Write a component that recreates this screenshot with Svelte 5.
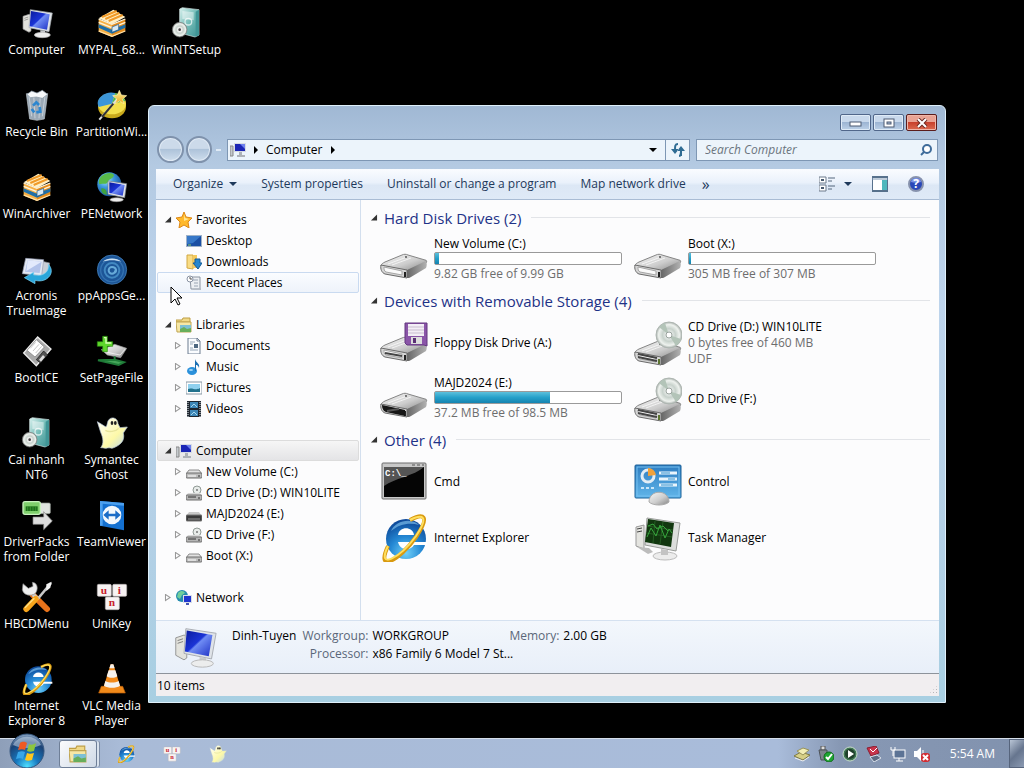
<script lang="ts">
  type Item = {
    icon: string;
    name: string;
    lines?: string[];
    used?: number;
  };

  type Lettering = { box: string; style: string; marks: { x: number; y: number; text: string }[] };

  const desktop = [
    { icon: "computer", label: "Computer" },
    { icon: "recycle", label: "Recycle Bin" },
    { icon: "archive", label: "WinArchiver" },
    { icon: "acronis", label: "Acronis TrueImage" },
    { icon: "bootice", label: "BootICE" },
    { icon: "setup", label: "Cai nhanh NT6" },
    { icon: "driverpacks", label: "DriverPacks from Folder" },
    { icon: "tools", label: "HBCDMenu" },
    { icon: "ie", label: "Internet Explorer 8" },
    { icon: "archive", label: "MYPAL_68..." },
    { icon: "partition", label: "PartitionWi..." },
    { icon: "penetwork", label: "PENetwork" },
    { icon: "ppapps", label: "ppAppsGe..." },
    { icon: "pagefile", label: "SetPageFile" },
    { icon: "ghost", label: "Symantec Ghost" },
    { icon: "teamviewer", label: "TeamViewer" },
    { icon: "unikey", label: "UniKey" },
    { icon: "vlc", label: "VLC Media Player" },
    { icon: "setup", label: "WinNTSetup" },
  ];

  const tree = [
    {
      icon: "star",
      label: "Favorites",
      open: true,
      leaf: true,
      children: [
        { icon: "desktop", label: "Desktop" },
        { icon: "downloads", label: "Downloads" },
        { icon: "recent", label: "Recent Places" },
      ],
    },
    {
      icon: "libraries",
      label: "Libraries",
      open: true,
      children: [
        { icon: "documents", label: "Documents" },
        { icon: "music", label: "Music" },
        { icon: "pictures", label: "Pictures" },
        { icon: "videos", label: "Videos" },
      ],
    },
    {
      icon: "pc-small",
      label: "Computer",
      open: true,
      children: [
        { icon: "hdd-small", label: "New Volume (C:)" },
        { icon: "cd-small", label: "CD Drive (D:) WIN10LITE" },
        { icon: "usb-small", label: "MAJD2024 (E:)" },
        { icon: "cd-small", label: "CD Drive (F:)" },
        { icon: "hdd-small", label: "Boot (X:)" },
      ],
    },
    { icon: "network", label: "Network", open: false, children: [] },
  ];

  const groups: { title: string; items: Item[] }[] = [
    {
      title: "Hard Disk Drives (2)",
      items: [
        { icon: "hdd", name: "New Volume (C:)", used: 2, lines: ["9.82 GB free of 9.99 GB"] },
        { icon: "hdd", name: "Boot (X:)", used: 1, lines: ["305 MB free of 307 MB"] },
      ],
    },
    {
      title: "Devices with Removable Storage (4)",
      items: [
        { icon: "floppy", name: "Floppy Disk Drive (A:)" },
        { icon: "cd", name: "CD Drive (D:) WIN10LITE", lines: ["0 bytes free of 460 MB", "UDF"] },
        { icon: "usb", name: "MAJD2024 (E:)", used: 62, lines: ["37.2 MB free of 98.5 MB"] },
        { icon: "cd", name: "CD Drive (F:)" },
      ],
    },
    {
      title: "Other (4)",
      items: [
        { icon: "cmd", name: "Cmd" },
        { icon: "control", name: "Control" },
        { icon: "ie", name: "Internet Explorer" },
        { icon: "taskmgr", name: "Task Manager" },
      ],
    },
  ];

  // icons that carry letters on top of their shape
  const lettering: Record<string, Lettering> = {
    unikey: {
      box: "0 0 48 48",
      style: "keycap",
      marks: [
        { x: 12, y: 19, text: "u" },
        { x: 35, y: 19, text: "i" },
        { x: 24, y: 38, text: "n" },
      ],
    },
    cmd: { box: "0 0 48 48", style: "prompt", marks: [{ x: 5, y: 18, text: "C:\\_" }] },
    help: { box: "0 0 16 16", style: "question", marks: [{ x: 8, y: 12, text: "?" }] },
  };

  const commands = ["System properties", "Uninstall or change a program", "Map network drive"];
  const pinned = [
    { icon: "ie", label: "Internet Explorer" },
    { icon: "unikey", label: "UniKey" },
    { icon: "ghost", label: "Symantec Ghost" },
  ];
  const tray = ["tray-disk", "tray-usb", "tray-play", "tray-red", "tray-net", "tray-sound"];

  let selected = $state("Computer");
  let hovered = $state("Recent Places");
  let search = $state("");
</script>

{#snippet icon(name: string)}
  {#if lettering[name]}
    <svg class="icon" viewBox={lettering[name].box} aria-hidden="true">
      <use href="#{name}" />
      {#each lettering[name].marks as mark}
        <text class={lettering[name].style} x={mark.x} y={mark.y}>{mark.text}</text>
      {/each}
    </svg>
  {:else}
    <svg class="icon" aria-hidden="true"><use href="#{name}" /></svg>
  {/if}
{/snippet}

<svg class="sprite" aria-hidden="true">
  <defs>
    <linearGradient id="screen" x1="0" y1="0" x2="1" y2="1">
      <stop offset="0" stop-color="#0a1a9c" /><stop offset=".45" stop-color="#1b34d6" />
      <stop offset=".5" stop-color="#6f8cf4" /><stop offset="1" stop-color="#1c2fc4" />
    </linearGradient>
    <linearGradient id="metal" x1="0" y1="0" x2="1" y2="1">
      <stop offset="0" stop-color="#f8f8f8" /><stop offset=".55" stop-color="#cdcdcd" /><stop offset="1" stop-color="#858585" />
    </linearGradient>
    <linearGradient id="metal-side" x1="0" y1="0" x2="1" y2="0">
      <stop offset="0" stop-color="#666" /><stop offset="1" stop-color="#b2b2b2" />
    </linearGradient>
    <linearGradient id="teal" x1="0" y1="0" x2="1" y2="1">
      <stop offset="0" stop-color="#d9f1ee" /><stop offset=".5" stop-color="#74bdb8" /><stop offset="1" stop-color="#3b8f92" />
    </linearGradient>
    <linearGradient id="gold" x1="0" y1="0" x2="0" y2="1">
      <stop offset="0" stop-color="#fff0a0" /><stop offset="1" stop-color="#e8a91d" />
    </linearGradient>
    <linearGradient id="sky" x1="0" y1="0" x2="0" y2="1">
      <stop offset="0" stop-color="#2d7cc0" /><stop offset="1" stop-color="#61b6ea" />
    </linearGradient>
    <radialGradient id="ie-blue" cx=".5" cy=".85" r=".8">
      <stop offset="0" stop-color="#6fd0f8" /><stop offset=".5" stop-color="#2488d4" /><stop offset="1" stop-color="#0e4a9a" />
    </radialGradient>
    <radialGradient id="globe" cx=".35" cy=".3" r=".8">
      <stop offset="0" stop-color="#b9ecff" /><stop offset=".4" stop-color="#3d9ae0" /><stop offset="1" stop-color="#0d3f8f" />
    </radialGradient>
    <radialGradient id="disc" cx=".5" cy=".5" r=".5">
      <stop offset="0" stop-color="#fff" /><stop offset=".5" stop-color="#c8d2cc" /><stop offset=".8" stop-color="#eef2ee" /><stop offset="1" stop-color="#aab2ae" />
    </radialGradient>
    <radialGradient id="orb" cx=".5" cy=".95" r=".95">
      <stop offset="0" stop-color="#4fe0ff" /><stop offset=".35" stop-color="#1779c0" />
      <stop offset=".75" stop-color="#1b4275" /><stop offset="1" stop-color="#8fa9c6" />
    </radialGradient>
    <linearGradient id="ghost-body" x1="0" y1="0" x2="1" y2="1">
      <stop offset="0" stop-color="#fff" /><stop offset=".6" stop-color="#fdf9a8" /><stop offset="1" stop-color="#b9d6f2" />
    </linearGradient>
  </defs>

  <symbol id="computer" viewBox="0 0 48 48">
    <path d="M3 14l9-3 3 1v24l-3 2-9-5z" fill="#e3e3dd" stroke="#8f9090" />
    <path d="M5 17l6-2M5 20l6-2" stroke="#777" />
    <path d="M14 4l33 5-5 28-30-6z" fill="#dfe3e8" stroke="#a5aab0" />
    <path d="M15 6l28 5-4 23-26-5z" fill="url(#screen)" />
    <path d="M29 35l7 1v5h-7z" fill="#c6c9cc" />
    <ellipse cx="32" cy="42" rx="12" ry="4" fill="#eceded" stroke="#b5b5b5" />
  </symbol>
  <symbol id="archive" viewBox="0 0 48 48">
    <path d="M4 18l20 8v19L4 37z" fill="#f7b045" />
    <path d="M24 26l20-8v18l-20 9z" fill="#e58b1b" />
    <path d="M4 17L26 4l18 11-20 11z" fill="#fff0c6" />
    <path d="M9 15L31 6M14 18l21-9M19 21l21-9" stroke="#f09a28" stroke-width="3" />
    <path d="M4 18l20 8 20-8M4 23l20 8 20-8" fill="none" stroke="#fff3d8" stroke-width="2" />
    <path d="M4 26l20 8 20-8v5l-20 9-20-9z" fill="#1f6fa8" />
    <path d="M24 30l10-4v8l-10 4z" fill="#d8e9f4" stroke="#174f7c" />
    <path d="M4 36l20 8 20-8" fill="none" stroke="#ffe3ac" stroke-width="2" />
  </symbol>
  <symbol id="setup" viewBox="0 0 48 48">
    <path d="M13 3l4-2 25 3v38l-6 3-23-6z" fill="url(#teal)" stroke="#d6e9e8" />
    <path d="M37 7l5-3v38l-5 3z" fill="#3f9596" />
    <path d="M17 6l17 2v12l-17-2z" fill="#fff" opacity=".45" />
    <circle cx="26" cy="22" r="5" fill="none" stroke="#fff" stroke-width="2" opacity=".7" />
    <circle cx="13" cy="34" r="11" fill="url(#disc)" stroke="#777" />
    <circle cx="13" cy="34" r="3" fill="#444" stroke="#eee" stroke-width="2" />
  </symbol>
  <symbol id="recycle" viewBox="0 0 48 48">
    <path d="M8 7h32l-5 38-11 2-11-2z" fill="#b7c7d6" opacity=".85" stroke="#e3ebf2" />
    <path d="M12 10l4 31M19 9l2 35M29 9l-2 35M36 10l-4 31" stroke="#edf3f8" opacity=".8" />
    <path d="M9 8l7-5 8 3 8-4 8 6-8 6-9-2-9 1z" fill="#f6f8fa" stroke="#8795a3" />
    <path d="M18 25l5-5 4 4M28 27l1 7-6 1M20 35l-4-5" fill="none" stroke="#2b86cf" stroke-width="4" />
  </symbol>
  <symbol id="partition" viewBox="0 0 48 48">
    <ellipse cx="24" cy="27" rx="21" ry="17" fill="#c9a91c" />
    <ellipse cx="24" cy="22" rx="21" ry="16" fill="#f3e04c" />
    <path d="M24 22L4 27A21 16 0 0 1 29 6z" fill="#3d96d8" />
    <path d="M24 22L29 6a21 16 0 0 1 15 12z" fill="#4cb850" />
    <path d="M5 46L32 15" stroke="#ddd" stroke-width="3" />
    <path d="M9 42l17-20" stroke="#333" stroke-width="3" />
    <path d="M35 2l3 7 8 1-6 5 2 7-7-4-6 4 2-7-6-5 7-1z" fill="url(#gold)" stroke="#fff4b5" />
  </symbol>
  <symbol id="penetwork" viewBox="0 0 48 48">
    <circle cx="20" cy="20" r="18" fill="url(#globe)" />
    <path d="M8 8c8-7 17-6 19-2-1 6-7 5-9 10-3 6-8 1-13 4-2-4 0-9 3-12z" fill="#58ba49" />
    <path d="M8 26c6-1 9 4 8 10-6-1-9-5-8-10z" fill="#3fa340" />
    <path d="M18 15l28 4-3 21-25-5z" fill="#e3e6ea" stroke="#777f88" />
    <path d="M20 17l23 4-3 16-20-4z" fill="url(#screen)" />
    <ellipse cx="31" cy="43" rx="10" ry="3" fill="#eee" stroke="#999" />
  </symbol>
  <symbol id="acronis" viewBox="0 0 48 48">
    <path d="M30 12l13 3-3 20H26z" fill="#c9ced6" stroke="#858b93" />
    <path d="M7 8l27 2-3 24-29-3z" fill="#e4e9f3" stroke="#939ab1" />
    <path d="M10 11l21 2-3 17-22-2z" fill="#b3c3ea" />
    <path d="M10 11l21 2-23 14z" fill="#e3eafc" />
    <path d="M41 17c12 12-2 29-20 24v5L5 37l14-8v4c13 3 24-4 22-16z" fill="#2aa6da" stroke="#7fd5f5" />
  </symbol>
  <symbol id="ppapps" viewBox="0 0 48 48">
    <circle cx="24" cy="25" r="22" fill="#1c5597" stroke="#4d8bc4" />
    <circle cx="24" cy="26" r="17" fill="none" stroke="#3472b0" stroke-width="2" />
    <circle cx="24" cy="26" r="11" fill="none" stroke="#4289c2" stroke-width="3" />
    <path d="M29 26a5 5 0 1 1-5-5c7 0 8 8 3 9" fill="none" stroke="#67abd9" stroke-width="3" />
    <path d="M10 13a18 13 0 0 1 28 0c-8-3-20-3-28 0z" fill="#dcebf7" opacity=".9" />
  </symbol>
  <symbol id="bootice" viewBox="0 0 48 48">
    <path d="M4 27L25 3l20 18-22 25z" fill="#a9a9a9" stroke="#eee" stroke-width="2" />
    <path d="M9 23L23 7l12 11-14 15z" fill="#fff" stroke="#777" />
    <path d="M14 20l8-9M18 24l9-10M22 27l9-10" stroke="#aaa" />
    <path d="M23 37l11-13 6 6-11 12z" fill="#555" stroke="#111" />
    <path d="M27 37l6-7 3 3-6 7z" fill="#ddd" />
  </symbol>
  <symbol id="pagefile" viewBox="0 0 48 48">
    <path d="M8 22l20-8 18 6-9 14-20-4z" fill="url(#metal)" stroke="#999" />
    <path d="M17 26l19 4 8-9" fill="none" stroke="#fff" />
    <path d="M28 32v7M3 38l31 7 8-4-14-4z" fill="#46a65a" stroke="#1f7c38" stroke-width="3" />
    <path d="M10 2h7v8h8v7h-8v8h-7v-8H2v-7h8z" fill="#5dd62b" stroke="#2a8a10" />
    <path d="M12 4h3v8h8" fill="none" stroke="#d8ffb5" stroke-width="2" />
  </symbol>
  <symbol id="ghost" viewBox="0 0 48 48">
    <path d="M18 6c4-8 15-5 15 4l3 6 11-1-6 9c3 12-5 19-17 23-3-1-6-1-9 0-2 0-4-1-8-1 5-6 4-14 0-23L2 7l13 8c2-3 2-6 3-9z" fill="url(#ghost-body)" stroke="#b9c9dc" />
    <ellipse cx="24" cy="9" rx="2" ry="3" fill="#222" />
    <ellipse cx="29" cy="9" rx="2" ry="3" fill="#222" />
    <path d="M14 20c5 3 16 2 20-3" fill="none" stroke="#e8e59b" stroke-width="2" />
  </symbol>
  <symbol id="driverpacks" viewBox="0 0 48 48">
    <rect x="25" y="6" width="19" height="16" rx="2" fill="#dfe3df" stroke="#8b918b" />
    <rect x="3" y="4" width="26" height="19" rx="3" fill="#7fd06c" stroke="#c9f3bf" stroke-width="2" />
    <rect x="7" y="11" width="18" height="7" fill="#1f6f1b" />
    <path d="M10 11v7M14 11v7M18 11v7M22 11v7" stroke="#45a93c" />
    <path d="M18 27h16v-8l13 14-13 13v-8H18z" fill="#dedede" stroke="#868686" />
  </symbol>
  <symbol id="teamviewer" viewBox="0 0 48 48">
    <path d="M6 3l36 3v41L6 40z" fill="#1470d0" />
    <path d="M6 3l36 3v4L10 7v33l-4 0z" fill="#4ca0ef" />
    <circle cx="24" cy="24" r="14" fill="#f3f8fd" />
    <path d="M11 24l8-7v5h10v-5l8 7-8 7v-5H19v5z" fill="#1b6cc7" />
  </symbol>
  <symbol id="tools" viewBox="0 0 48 48">
    <path d="M17 20L39 42" stroke="#e8731b" stroke-width="9" stroke-linecap="round" />
    <path d="M18 20l8 8" stroke="#ccc" stroke-width="6" />
    <path d="M3 4l8 7 7-3-1-6c9 1 9 12 4 17-6 4-17 3-19-6z" fill="#eee" stroke="#888" />
    <path d="M45 3L25 27" stroke="#c8c8c8" stroke-width="4" />
    <path d="M38 5l8-4-2 9-6 5z" fill="#f4f4f4" />
    <path d="M22 27L8 42" stroke="#f7a51c" stroke-width="9" stroke-linecap="round" />
    <path d="M20 26L6 40" stroke="#ffdf83" stroke-width="2" />
  </symbol>
  <symbol id="ie" viewBox="0 0 48 48">
    <circle cx="26" cy="25" r="20" fill="url(#ie-blue)" />
    <path d="M18 21c1-9 15-9 16 0z" fill="#fff" />
    <path d="M18 28h29v3H34c-3 6-14 6-16-3z" fill="#fff" />
    <path d="M11 17C15 7 31 3 39 11c-9-3-20-1-28 6z" fill="#8ccdf5" opacity=".6" />
    <path d="M8 32C-5 60 20 46 36 23 51 1 43-1 30 6" fill="none" stroke="#d99a10" stroke-width="4" />
    <path d="M8 32C-4 57 20 44 36 22 50 1 42 0 30 6" fill="none" stroke="#ffdf5e" stroke-width="2" />
  </symbol>
  <symbol id="unikey" viewBox="0 0 48 48">
    <g fill="#f7f3f3" stroke="#b9b4b4">
      <rect x="2" y="5" width="21" height="18" rx="2" /><rect x="25" y="5" width="21" height="18" rx="2" />
      <rect x="14" y="24" width="21" height="19" rx="2" />
    </g>
  </symbol>
  <symbol id="vlc" viewBox="0 0 48 48">
    <path d="M8 35h32l4 10H4z" fill="#f08a1a" stroke="#b85c06" />
    <path d="M22 2h4l11 35c-5 5-21 5-26 0z" fill="#f28b1c" />
    <path d="M19 11h10l3 9c-5 3-11 3-16 0zM14 27c6 3 14 3 20 0l2 7c-6 4-18 4-24 0z" fill="#f5f2ee" />
    <path d="M22 2h4l2 6h-8z" fill="#f5f2ee" />
  </symbol>

  <symbol id="hdd" viewBox="0 0 48 48">
    <path d="M1 30c0-2 2-3 4-4l17-7c2-1 4-1 6 0l17 5c2 0 2 2 1 3L28 35z" fill="url(#metal)" stroke="#858585" />
    <path d="M27 34l19-9c1 2 1 5 0 7L31 41c-1 1-3 1-4 1z" fill="url(#metal-side)" />
    <path d="M1 29l26 5v8L5 38c-3-1-5-5-4-9z" fill="#d5d5d5" stroke="#6b6b6b" />
    <path d="M4 31l18 4v4L6 36c-2-1-2-3-2-5z" fill="#fafafa" stroke="#a5a5a5" />
    <path d="M25 36v5" stroke="#222" stroke-width="2" />
    <path d="M8 28l19-7M12 29l19-7" stroke="#fff" opacity=".7" />
    <circle cx="26" cy="21" r="1" fill="#555" />
  </symbol>
  <symbol id="usb" viewBox="0 0 48 48">
    <use href="#hdd" />
    <path d="M2 30l23 5v6L6 37c-3-1-4-4-4-7z" fill="#161616" />
    <path d="M7 36l12-2" stroke="#555" stroke-width="2" />
  </symbol>
  <symbol id="floppy" viewBox="0 0 48 48">
    <use href="#hdd" />
    <path d="M5 34l17 3" stroke="#444" stroke-width="2" />
    <path d="M25 4h22v23l-3-1H27l-2-2z" fill="#8a55a8" stroke="#63377f" />
    <path d="M28 5h16v12H28z" fill="#f3eef6" />
    <path d="M28 8h16M28 11h16M28 14h16" stroke="#c9bdd0" />
    <path d="M31 18h11v7H31z" fill="#ddd" /><path d="M33 19h3v5h-3z" fill="#5a2f75" />
  </symbol>
  <symbol id="cd" viewBox="0 0 48 48">
    <g transform="translate(0 4)">
      <use href="#hdd" />
      <path d="M4 31l19 4M4 34l19 4" stroke="#444" stroke-width="2" />
      <path d="M25 36v5" stroke="#5c7430" stroke-width="2" />
    </g>
    <circle cx="35" cy="16" r="13" fill="url(#disc)" stroke="#aeb6b1" />
    <path d="M35 16L25 8a13 13 0 0 1 6-4zM35 16l12 4a13 13 0 0 1-5 7z" fill="#b3c4b8" />
    <circle cx="35" cy="16" r="3" fill="#fff" stroke="#9aa39e" />
  </symbol>
  <symbol id="cmd" viewBox="0 0 48 48">
    <rect x="2" y="5" width="44" height="36" rx="1" fill="#c8c8c8" stroke="#6d6d6d" />
    <rect x="4" y="9" width="40" height="30" fill="#050505" />
    <path d="M4 9h40C34 18 15 20 4 28z" fill="#555" />
    <path d="M32 7h3M37 7h3M42 7h2" stroke="#555" />
  </symbol>
  <symbol id="control" viewBox="0 0 48 48">
    <rect x="1" y="7" width="46" height="33" rx="1" fill="url(#sky)" stroke="#1a6098" />
    <rect x="3" y="9" width="42" height="29" fill="none" stroke="#75bff0" />
    <circle cx="14" cy="18" r="6" fill="none" stroke="#e2edf5" stroke-width="3" />
    <path d="M14 18v-8a8 8 0 0 1 8 7z" fill="#f0a13b" />
    <path d="M25 15h18M25 21h18M25 27h18" stroke="#eaf5fc" stroke-width="3" />
    <path d="M27 15h9M34 21h7M27 27h12" stroke="#2d8fce" />
    <path d="M7 30h3M12 30h3M17 30h3" stroke="#c9e6f8" stroke-width="2" />
    <path d="M15 44c0-13 20-13 20 0-4 4-16 4-20 0z" fill="url(#metal)" stroke="#aaa" />
  </symbol>
  <symbol id="taskmgr" viewBox="0 0 48 48">
    <path d="M2 13l8-2v24l-8-3z" fill="#e4e4e0" stroke="#999" />
    <path d="M3 15l5-1M3 18l5-1" stroke="#444" />
    <path d="M3 33l12 1 4 4-5 2z" fill="#bcbcbc" />
    <path d="M13 4l33 5-4 28-31-6z" fill="#dcdedc" stroke="#999c99" />
    <path d="M14 5l26 4-3 24-26-5z" fill="#11370f" />
    <path d="M13 12l26 4M12 19l26 4M21 7l-2 22M29 8l-3 22" stroke="#245c23" />
    <path d="M13 23l4-9 5 8 4-11 5 13 4-9 3 4M14 12l5-2 4 5 6-3 5 5" fill="none" stroke="#36a63c" />
    <ellipse cx="31" cy="42" rx="12" ry="4" fill="#ececec" stroke="#bbb" />
    <path d="M27 35l7 1v5h-7z" fill="#c3c3c3" />
  </symbol>

  <symbol id="star" viewBox="0 0 16 16">
    <path d="M8 0l2 5 6 1-4 4 1 6-5-3-5 3 1-6-4-4 6-1z" fill="#ffb92b" stroke="#dc8716" />
    <path d="M8 2l1 4 4 1-5 2z" fill="#ffe592" />
  </symbol>
  <symbol id="desktop" viewBox="0 0 16 16">
    <rect y="2" width="16" height="12" fill="#9fb2c8" /><rect x="1" y="3" width="14" height="10" fill="#1b4fa3" />
    <path d="M1 3h14L7 10l-6 1z" fill="#3778c8" /><path d="M2 12h3" stroke="#8fd36b" />
  </symbol>
  <symbol id="downloads" viewBox="0 0 16 16">
    <path d="M1 1h6v14l-6-1z" fill="#f9dc85" stroke="#d2a843" /><path d="M7 1h4v13H7z" fill="#f3c95d" />
    <path d="M9 5h5v4h2l-4 6-5-6h2z" fill="#2687cf" stroke="#125a98" />
  </symbol>
  <symbol id="recent" viewBox="0 0 16 16">
    <path d="M4 2h10v12H5z" fill="#eceff3" stroke="#8b94a0" /><path d="M7 5h5M8 8h4M8 11h4" stroke="#9aa5b3" />
    <circle cx="4" cy="4" r="3" fill="#fff" stroke="#8a93a3" /><path d="M4 2v2h2" fill="none" stroke="#555" />
    <path d="M6 14l9-1v2H7z" fill="#b5bcc6" />
  </symbol>
  <symbol id="libraries" viewBox="0 0 16 16">
    <path d="M0 3h6l1-2h7v4H0z" fill="#f0d988" stroke="#bf9f45" /><path d="M0 5h15v10H1z" fill="#f6e7a5" stroke="#bfa553" />
    <path d="M4 8h11v7H4z" fill="#7dc0d5" /><path d="M4 12l4-2 3 2 4-1v4H4z" fill="#68ae5b" />
  </symbol>
  <symbol id="documents" viewBox="0 0 16 16">
    <path d="M2 0h9l3 3v13H2z" fill="#fafcff" stroke="#6d7d90" /><path d="M11 0v3h3" fill="none" stroke="#6d7d90" />
    <path d="M4 4h5M4 6h3M4 10h3M4 12h8" stroke="#96a6b8" /><path d="M8 6h4v4H8z" fill="#4c6680" />
  </symbol>
  <symbol id="music" viewBox="0 0 16 16">
    <ellipse cx="6" cy="12" rx="5" ry="4" fill="#2b91db" /><path d="M9 12V0c1 4 5 4 4 9-1-3-2-3-3-3v6z" fill="#1b6fb3" />
    <ellipse cx="5" cy="11" rx="2" ry="1" fill="#9fd4f6" />
  </symbol>
  <symbol id="pictures" viewBox="0 0 16 16">
    <rect y="2" width="16" height="12" fill="#fff" stroke="#8797a5" /><rect x="2" y="4" width="12" height="8" fill="#8fd0ee" />
    <path d="M2 9c4-2 8 2 12-1v4H2z" fill="#22728d" />
  </symbol>
  <symbol id="videos" viewBox="0 0 16 16">
    <rect x="1" width="14" height="16" fill="#1f2730" /><rect x="4" y="1" width="8" height="6" fill="#3d87b8" /><rect x="4" y="9" width="8" height="6" fill="#3d87b8" />
    <path d="M2 1v15M14 1v15" stroke="#e8eef2" stroke-dasharray="1 1" /><path d="M5 6l3-3 3 3M5 14l3-3 3 3" stroke="#a5d8ee" fill="none" />
  </symbol>
  <symbol id="pc-small" viewBox="0 0 16 16">
    <path d="M0 4h3v10H0z" fill="#c4c9cd" stroke="#888" /><path d="M4 1h12v9H4z" fill="#d6dbe3" />
    <path d="M5 2h10v7H5z" fill="#1a25b5" /><path d="M10 2h5v5z" fill="#6c80ee" /><path d="M9 10h3v3h3v2H7v-2h2z" fill="#adb2b8" />
  </symbol>
  <symbol id="hdd-small" viewBox="0 0 16 16">
    <path d="M3 6h10l3 4H0z" fill="#e2e2e2" stroke="#8c8c8c" /><rect y="9" width="16" height="5" rx="1" fill="#bdbdbd" stroke="#6d6d6d" />
    <path d="M2 12h8" stroke="#fff" /><path d="M12 12h2" stroke="#333" />
  </symbol>
  <symbol id="usb-small" viewBox="0 0 16 16">
    <path d="M3 6h10l3 4H0z" fill="#c9c9c9" /><rect y="9" width="16" height="6" rx="1" fill="#3a3a3a" stroke="#777" /><path d="M2 13h12" stroke="#999" />
  </symbol>
  <symbol id="cd-small" viewBox="0 0 16 16">
    <circle cx="11" cy="5" r="4" fill="#e8ecea" stroke="#919a96" /><circle cx="11" cy="5" r="1" fill="#777" />
    <path d="M2 8h12l2 3H0z" fill="#d8d8d8" /><rect y="10" width="16" height="5" rx="1" fill="#b5b5b5" stroke="#6c6c6c" /><path d="M2 12h8M12 13h2" stroke="#333" />
  </symbol>
  <symbol id="network" viewBox="0 0 16 16">
    <circle cx="6" cy="6" r="6" fill="#258cae" /><path d="M2 3c3-3 6-2 7 0L6 5 4 9 1 7z" fill="#70ce9c" />
    <path d="M7 5h9v8H7z" fill="#d8dde8" /><path d="M8 6h7v6H8z" fill="#1f35cf" /><path d="M10 13h3v2h-3z" fill="#4556b2" />
  </symbol>

  <symbol id="views" viewBox="0 0 16 16">
    <path d="M0 1h7v6H0zM0 9h7v6H0z" fill="#fff" stroke="#6c7a8c" /><path d="M2 4h3M2 12h3" stroke="#47596e" stroke-width="2" />
    <path d="M9 2h7M9 5h4M9 10h7M9 13h4" stroke="#55677c" />
  </symbol>
  <symbol id="pane" viewBox="0 0 16 16">
    <rect x="0" y="1" width="16" height="14" fill="#fff" stroke="#57718c" stroke-width="2" /><path d="M0 3h16" stroke="#7f98b4" />
    <path d="M10 4h5v10h-5z" fill="#4fb8bd" />
  </symbol>
  <symbol id="help" viewBox="0 0 16 16">
    <circle cx="8" cy="8" r="7" fill="#2a48b8" stroke="#8792ad" stroke-width="2" />
    <path d="M3 6a5 4 0 0 1 10 0c-3 1-7 1-10 0z" fill="#7d95e6" />
  </symbol>
  <symbol id="lens" viewBox="0 0 12 12">
    <circle cx="7" cy="5" r="4" fill="#fff" stroke="#3f6c9a" stroke-width="2" /><path d="M4 8l-3 3" stroke="#3f6c9a" stroke-width="2" />
  </symbol>
  <symbol id="refresh" viewBox="0 0 14 14">
    <path d="M7 1c-3 0-3 2-3 6M10 13V5M8 13c2 0 2-2 2-6" fill="none" stroke="#2f6c93" stroke-width="2" />
    <path d="M0 6h8l-4 5zM6 8h8l-4-5z" fill="#2f6c93" />
  </symbol>

  <symbol id="tray-disk" viewBox="0 0 16 16">
    <path d="M0 10l7-4 9 3-7 5z" fill="#d6cf86" stroke="#7f7a43" /><path d="M3 5l6-3 6 2-6 5z" fill="#f1edb5" stroke="#98935a" /><path d="M1 12l8 3 6-4" stroke="#eee" fill="none" />
  </symbol>
  <symbol id="tray-usb" viewBox="0 0 16 16">
    <path d="M3 0h4v4H3z" fill="#ddd" stroke="#555" /><path d="M1 4h8v10H3z" fill="#7d858e" stroke="#4d5359" />
    <circle cx="11" cy="11" r="5" fill="#1ea632" stroke="#0f6a1a" /><path d="M8 11l2 2 4-5" fill="none" stroke="#fff" stroke-width="2" />
  </symbol>
  <symbol id="tray-play" viewBox="0 0 16 16">
    <circle cx="8" cy="8" r="7" fill="#3f7752" stroke="#c9dccd" /><circle cx="8" cy="8" r="5" fill="#20402b" /><path d="M6 4l6 4-6 4z" fill="#fff" />
  </symbol>
  <symbol id="tray-red" viewBox="0 0 16 16">
    <path d="M1 2l9-2 3 7-8 3z" fill="#c9344c" stroke="#8d1d30" /><path d="M4 3l3 3 4-4" stroke="#fff" fill="none" /><path d="M4 11l7-2 4 3-7 4z" fill="#5d6b83" stroke="#d9e0ea" />
  </symbol>
  <symbol id="tray-net" viewBox="0 0 16 16">
    <rect x="4" y="4" width="11" height="8" fill="#5c7395" stroke="#fff" /><path d="M9 12v3M6 15h7M1 1v3h4V1M3 4v6" stroke="#fff" fill="none" />
  </symbol>
  <symbol id="tray-sound" viewBox="0 0 16 16">
    <path d="M0 5h3l4-4v14l-4-4H0z" fill="#fff" /><path d="M9 4v7" stroke="#fff" />
    <rect x="7" y="7" width="9" height="9" rx="3" fill="#d22d33" /><path d="M9 9l5 5M14 9l-5 5" stroke="#fff" stroke-width="2" />
  </symbol>

  <symbol id="start" viewBox="0 0 36 36">
    <circle cx="18" cy="18" r="17" fill="url(#orb)" stroke="#33557e" />
    <path d="M4 12a15 13 0 0 1 28 0c-8 4-20 4-28 0z" fill="#d5e4f2" opacity=".5" />
    <path d="M11 10c3-2 5-1 7 0l-2 7c-2-1-4-1-7 0z" fill="#ee5a24" />
    <path d="M20 11c2 1 4 1 7-1l-2 8c-3 1-5 1-7 0z" fill="#8cc63f" />
    <path d="M9 19c3-1 5-1 7 0l-2 7c-2-1-4-1-7 0z" fill="#37a6e8" />
    <path d="M18 20c2 1 4 1 7 0l-2 7c-3 1-5 1-7 0z" fill="#ffc61e" />
  </symbol>
</svg>

<div class="screen">
  <main class="desktop">
    <div class="shortcuts">
      {#each desktop as shortcut}
        <button class="shortcut">
          {@render icon(shortcut.icon)}
          <span>{shortcut.label}</span>
        </button>
      {/each}
    </div>

    <section class="window" aria-label="Computer">
      <header class="titlebar">
        <button class="caption" aria-label="Minimize">
          <svg viewBox="0 0 14 10"><rect x="1" y="4" width="11" height="4" fill="#fff" stroke="#4c5b73" /></svg>
        </button>
        <button class="caption" aria-label="Maximize">
          <svg viewBox="0 0 14 10"><rect x="2" y="1" width="10" height="8" fill="#fff" stroke="#4c5b73" /><rect x="5" y="4" width="4" height="2" fill="#a9bdd8" stroke="#4c5b73" /></svg>
        </button>
        <button class="caption close" aria-label="Close">
          <svg viewBox="0 0 14 10"><path d="M3 1l8 8M11 1L3 9" stroke="#6d2a22" stroke-width="4" /><path d="M3 1l8 8M11 1L3 9" stroke="#fff" stroke-width="2" /></svg>
        </button>
      </header>

      <div class="navbar">
        <div class="history">
          <button class="round" aria-label="Back"></button>
          <button class="round" aria-label="Forward"></button>
          <span class="dash"></span>
        </div>
        <div class="address">
          {@render icon("pc-small")}
          <i class="tri right"></i>
          <button class="crumb">Computer</button>
          <i class="tri right"></i>
          <button class="drop" aria-label="Previous locations"><i class="tri down"></i></button>
          <button class="refresh" aria-label="Refresh">{@render icon("refresh")}</button>
        </div>
        <label class="search">
          <input type="text" placeholder="Search Computer" aria-label="Search Computer" bind:value={search} />
          {@render icon("lens")}
        </label>
      </div>

      <div class="toolbar">
        <button>Organize <i class="tri down"></i></button>
        {#each commands as command}
          <button>{command}</button>
        {/each}
        <button class="more" aria-label="More commands">»</button>
        <div class="tools">
          <button aria-label="Change your view">{@render icon("views")}<i class="tri down"></i></button>
          <button aria-label="Show the preview pane">{@render icon("pane")}</button>
          <button aria-label="Get help">{@render icon("help")}</button>
        </div>
      </div>

      <div class="content">
        <nav class="tree">
          {#each tree as group}
            <ul>
              <li>
                <button
                  class="node"
                  class:selected={selected === group.label}
                  onclick={() => (selected = group.label)}
                >
                  <i class="twist" class:open={group.open}></i>
                  {@render icon(group.icon)}
                  {group.label}
                </button>
              </li>
              {#each group.children as child}
                <li>
                  <button
                    class="node child"
                    class:selected={selected === child.label}
                    class:hovered={hovered === child.label}
                    onclick={() => (selected = child.label)}
                    onmouseenter={() => (hovered = child.label)}
                  >
                    <i class="twist" class:hidden={group.leaf}></i>
                    {@render icon(child.icon)}
                    {child.label}
                  </button>
                </li>
              {/each}
            </ul>
          {/each}
        </nav>

        <div class="files">
          {#each groups as group}
            <section>
              <h2><i class="twist open"></i>{group.title}</h2>
              <div class="tiles">
                {#each group.items as item}
                  <button class="tile">
                    {@render icon(item.icon)}
                    <span class="info">
                      <span>{item.name}</span>
                      {#if item.used}
                        <span class="meter"><span class="fill" style="width: {item.used}%"></span></span>
                      {/if}
                      {#each item.lines ?? [] as line}
                        <span class="sub">{line}</span>
                      {/each}
                    </span>
                  </button>
                {/each}
              </div>
            </section>
          {/each}
        </div>
      </div>

      <div class="details">
        {@render icon("computer")}
        <strong>Dinh-Tuyen</strong>
        <dl>
          <dt>Workgroup:</dt>
          <dd>WORKGROUP</dd>
          <dt>Memory:</dt>
          <dd>2.00 GB</dd>
          <dt>Processor:</dt>
          <dd>x86 Family 6 Model 7 St...</dd>
        </dl>
      </div>
      <footer class="status">10 items<span class="grip"></span></footer>
    </section>

    <svg class="cursor" viewBox="0 0 12 20" aria-hidden="true">
      <path d="M1 1v16l4-4 3 6 2-1-3-6h5z" fill="#fff" stroke="#000" />
    </svg>
  </main>

  <footer class="taskbar">
    <button class="start" aria-label="Start">{@render icon("start")}</button>
    <button class="task" aria-label="Computer">{@render icon("libraries")}</button>
    {#each pinned as app}
      <button class="pin" aria-label={app.label}>{@render icon(app.icon)}</button>
    {/each}
    <div class="tray">
      {#each tray as name}
        {@render icon(name)}
      {/each}
      <time>5:54 AM</time>
      <button class="peek" aria-label="Show desktop"></button>
    </div>
  </footer>
</div>

<style>
  :global(body) {
    background: #000;
  }

  .screen {
    display: flex;
    flex-direction: column;
    min-height: 100vh;
    font-family: "Open Sans", "Noto Sans", sans-serif;
    font-size: 12px;
    line-height: 16px;
    color: #000;
  }

  button {
    margin: 0;
    padding: 0;
    border: 0;
    background: none;
    font: inherit;
    color: inherit;
  }

  .sprite {
    position: absolute;
    width: 0;
    height: 0;
  }

  .keycap {
    font: bold 17px "Liberation Serif", serif;
    fill: #c8202c;
    text-anchor: middle;
  }

  .prompt {
    font: bold 9px "Liberation Mono", monospace;
    fill: #fff;
  }

  .question {
    font: bold 12px "Open Sans", sans-serif;
    fill: #fff;
    text-anchor: middle;
  }

  .icon {
    flex: none;
    width: 16px;
    height: 16px;
  }

  .desktop {
    position: relative;
    flex: 1;
  }

  .shortcuts {
    display: grid;
    grid-template-rows: repeat(9, 82px);
    grid-auto-flow: column;
    grid-auto-columns: 75px;
    width: max-content;
  }

  .shortcut {
    display: flex;
    flex-direction: column;
    align-items: center;
    gap: 3px;
    padding: 7px 2px 0 0;
    color: #fff;
    line-height: 15px;
  }

  .shortcut .icon {
    width: 32px;
    height: 32px;
  }

  .window {
    position: absolute;
    inset: 105px 78px 35px 148px;
    display: flex;
    flex-direction: column;
    box-sizing: border-box;
    padding: 0 6px 6px 7px;
    border: 1px solid #dff0fb;
    border-radius: 6px 6px 0 0;
    background: linear-gradient(#a0b8d4, #b4cae2 60px, #bdd4ec 200px, #b4d0e6 70%, #a8cfe2);
  }

  .titlebar {
    display: flex;
    justify-content: flex-end;
    gap: 2px;
    padding: 8px 2px 5px;
  }

  .caption {
    display: grid;
    place-items: center;
    width: 31px;
    height: 17px;
    box-sizing: border-box;
    border: 1px solid #51678a;
    border-radius: 2px;
    background: linear-gradient(#c9d9ec 45%, #9db5d3 50%, #bdd1e8);
    box-shadow: inset 0 0 0 1px #dfebf7;
  }

  .caption svg {
    width: 14px;
    height: 10px;
  }

  .close {
    border-color: #5b1d1c;
    background: linear-gradient(#e9a394 45%, #c8412c 50%, #dc6b50);
    box-shadow: inset 0 0 0 1px #f0b6a8;
  }

  .navbar {
    display: flex;
    align-items: center;
    gap: 6px;
    padding: 0 1px 6px;
  }

  .history {
    display: flex;
    align-items: center;
    gap: 2px;
    width: 64px;
  }

  .round {
    width: 27px;
    height: 27px;
    box-sizing: border-box;
    border: 2px solid #7f92ac;
    border-radius: 50%;
    background: linear-gradient(#ccdaea 45%, #aec3da 50%, #cfdeed);
    box-shadow: inset 0 0 0 1px #dfe9f4;
  }

  .dash {
    width: 5px;
    height: 2px;
    margin-left: 2px;
    background: #dfeaf5;
  }

  .address,
  .search {
    display: flex;
    align-items: center;
    height: 22px;
    box-sizing: border-box;
    border: 1px solid #7e97b4;
    background: #ecf4fb;
  }

  .address {
    flex: 1;
    gap: 8px;
    padding-left: 2px;
  }

  .search {
    flex: 0 1 242px;
    padding: 0 5px 0 8px;
  }

  .search input {
    flex: 1;
    min-width: 0;
    padding: 0;
    border: 0;
    outline: none;
    background: none;
    font: inherit;
  }

  .search input::placeholder {
    color: #6b747e;
    font-style: italic;
    opacity: 1;
  }

  .search .icon {
    width: 12px;
    height: 12px;
  }

  .drop {
    display: flex;
    margin-left: auto;
  }

  .refresh {
    display: grid;
    place-items: center;
    width: 24px;
    height: 20px;
    border-left: 1px solid #7e97b4;
  }

  .refresh .icon {
    width: 14px;
    height: 14px;
  }

  .tri {
    flex: none;
    width: 0;
    height: 0;
    border: 4px solid transparent;
  }

  .tri.right {
    border-width: 4px 0 4px 4px;
    border-left-color: #000;
  }

  .tri.down {
    border-width: 4px 4px 0;
    border-top-color: currentColor;
  }

  .toolbar {
    display: flex;
    align-items: center;
    gap: 24px;
    height: 31px;
    box-sizing: border-box;
    padding: 0 15px 0 17px;
    border-bottom: 1px solid #a9bcd4;
    background: linear-gradient(#fafcff, #eaf1fb 45%, #dce7f5 55%, #dfeaf7);
    color: #1e395b;
    white-space: nowrap;
  }

  .toolbar button {
    display: flex;
    align-items: center;
    gap: 6px;
  }

  .toolbar .more {
    margin-left: -8px;
    font-size: 16px;
  }

  .tools {
    display: flex;
    gap: 20px;
    margin-left: auto;
  }

  .tools button {
    gap: 9px;
  }

  .content {
    display: flex;
    flex: 1;
    min-height: 0;
    background: #fcfcfd;
  }

  .tree {
    width: 204px;
    padding-top: 9px;
    border-right: 1px solid #d3dfee;
  }

  .tree ul {
    margin: 0 0 21px;
    padding: 0;
    list-style: none;
  }

  .tree li {
    display: flex;
  }

  .node {
    display: flex;
    flex: 1;
    align-items: center;
    gap: 4px;
    height: 21px;
    box-sizing: border-box;
    margin: 0 1px;
    padding-left: 6px;
    border: 1px solid transparent;
    border-radius: 2px;
    text-align: left;
    white-space: nowrap;
  }

  .child {
    padding-left: 16px;
  }

  .node.hovered {
    border-color: #c9daf0;
    background: linear-gradient(#fafcff, #eef3fa);
  }

  .node.selected {
    border-color: #dcdcdc;
    background: linear-gradient(#f6f6f6, #e4e4e6);
  }

  .twist {
    flex: none;
    width: 8px;
    height: 8px;
    background: #9a9a9a;
    clip-path: polygon(evenodd, 12% 0, 88% 50%, 12% 100%, 12% 0, 25% 24%, 25% 76%, 64% 50%, 25% 24%);
  }

  .twist.open {
    background: #333;
    clip-path: polygon(88% 12%, 88% 88%, 12% 88%);
  }

  .twist.hidden {
    visibility: hidden;
  }

  .files {
    flex: 1;
    min-width: 0;
    padding: 5px 9px 0;
    overflow: hidden;
  }

  h2 {
    display: flex;
    align-items: center;
    gap: 6px;
    height: 27px;
    box-sizing: border-box;
    margin: 0;
    padding-bottom: 2px;
    font-size: 15px;
    font-weight: 400;
    line-height: 20px;
    color: #1e3287;
    white-space: nowrap;
  }

  h2::after {
    content: "";
    flex: 1;
    height: 1px;
    margin-left: 4px;
    background: #e2e4e8;
  }

  .tiles {
    display: grid;
    grid-template-columns: repeat(auto-fill, 254px);
    grid-auto-rows: 56px;
    padding-left: 10px;
  }

  .tile {
    display: flex;
    align-items: center;
    gap: 6px;
    text-align: left;
  }

  .tile .icon {
    width: 48px;
    height: 48px;
  }

  .info {
    display: flex;
    flex-direction: column;
    width: 188px;
  }

  .sub {
    color: #6d6d6d;
  }

  .meter {
    height: 13px;
    box-sizing: border-box;
    margin: 0 0 1px;
    border: 1px solid #9a9a9a;
    border-radius: 2px;
    background: #fff;
  }

  .info:has(.meter) {
    padding-bottom: 2px;
  }

  .fill {
    display: block;
    height: 100%;
    background: linear-gradient(#5cc0dc, #25a0c9 50%, #1583b0);
  }

  .details {
    display: flex;
    gap: 14px;
    height: 53px;
    box-sizing: border-box;
    padding: 4px 16px;
    border-top: 1px solid #d5e1f0;
    background: linear-gradient(#f3f7fc, #e8eff9);
    line-height: 18px;
  }

  .details .icon {
    width: 46px;
    height: 44px;
  }

  .details strong {
    padding-top: 2px;
    font-weight: 400;
  }

  dl {
    display: grid;
    grid-template-columns: auto 133px auto auto;
    gap: 0 4px;
    margin: 0 0 0 -8px;
    padding-top: 2px;
    align-content: start;
    white-space: nowrap;
  }

  dt {
    text-align: right;
    color: #5a6779;
  }

  dd {
    margin: 0;
  }

  .status {
    display: flex;
    justify-content: space-between;
    align-items: center;
    height: 23px;
    box-sizing: border-box;
    padding: 2px 1px 0;
    border-top: 1px solid #8d939b;
    background: #f1eef0;
  }

  .grip {
    align-self: flex-end;
    width: 9px;
    height: 9px;
    margin-bottom: 2px;
    background: radial-gradient(#b5b5b9 1px, transparent 1px) 0 0 / 3px 3px;
    clip-path: polygon(100% 0, 100% 100%, 0 100%);
  }

  .cursor {
    position: absolute;
    top: 286px;
    left: 170px;
    width: 12px;
    height: 20px;
  }

  .taskbar {
    display: flex;
    align-items: center;
    height: 30px;
    box-sizing: border-box;
    border-top: 1px solid #d5deea;
    background: linear-gradient(90deg, #8e9fb9, #a9bbd7 120px, #a9bcda 76%, #8798b4 82%, #8192ae);
  }

  .start {
    z-index: 1;
    width: 36px;
    height: 36px;
    margin: -5px 14px 0 9px;
  }

  .start .icon {
    width: 36px;
    height: 36px;
  }

  .task {
    display: grid;
    place-items: center;
    width: 38px;
    height: 28px;
    box-sizing: border-box;
    margin-right: 6px;
    border: 1px solid #6f7f97;
    border-radius: 3px;
    background: linear-gradient(135deg, #fbfcfd, #cfd9e6);
    box-shadow: 3px 0 0 -1px #d9e2ed, 4px 0 0 -1px #7d8ca5;
  }

  .pin {
    display: grid;
    place-items: center;
    width: 46px;
    height: 28px;
  }

  .pin .icon,
  .task .icon {
    width: 18px;
    height: 18px;
  }

  .tray {
    display: flex;
    align-items: center;
    gap: 8px;
    height: 100%;
    margin-left: auto;
    color: #fff;
  }

  time {
    margin: 0 6px 0 12px;
  }

  .peek {
    align-self: stretch;
    width: 15px;
    border: 1px solid #56647c;
    border-right: 0;
    background: linear-gradient(135deg, #b9c5d6, #66758e 50%, #8b9ab2);
  }
</style>
